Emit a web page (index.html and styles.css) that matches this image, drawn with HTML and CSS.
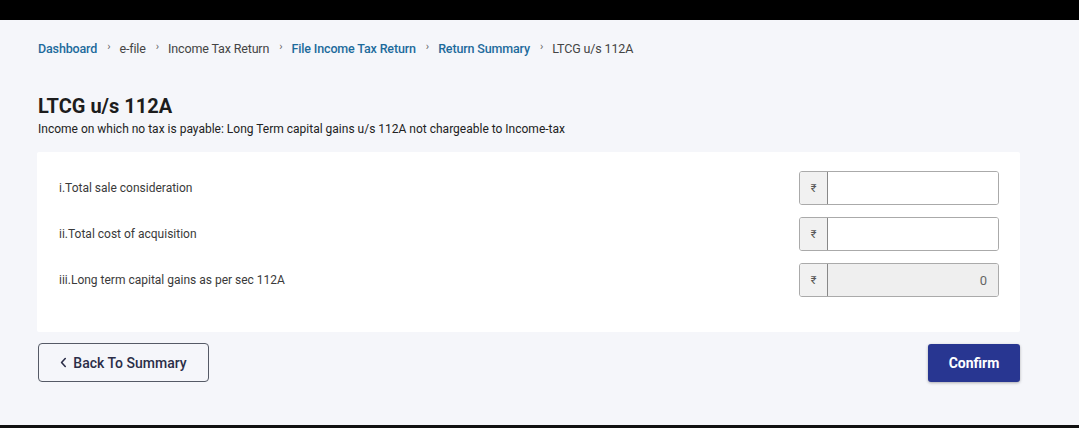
FILE: index.html
```html
<!DOCTYPE html>
<html lang="en">
<head>
<meta charset="utf-8">
<title>LTCG u/s 112A</title>
<link rel="stylesheet" href="styles.css">
</head>
<body>
<div class="topbar"></div>
<main class="page">
  <nav class="crumbs">
    <a class="crumb link">Dashboard</a><span class="sep">›</span>
    <span class="crumb">e-file</span><span class="sep">›</span>
    <span class="crumb">Income Tax Return</span><span class="sep">›</span>
    <a class="crumb link">File Income Tax Return</a><span class="sep">›</span>
    <a class="crumb link">Return Summary</a><span class="sep">›</span>
    <span class="crumb">LTCG u/s 112A</span>
  </nav>
  <h1 class="title">LTCG u/s 112A</h1>
  <p class="subtitle">Income on which no tax is payable: Long Term capital gains u/s 112A not chargeable to Income-tax</p>
  <section class="card">
    <div class="row">
      <label class="label">i.Total sale consideration</label>
      <div class="field"><span class="prefix">₹</span><span class="input"></span></div>
    </div>
    <div class="row">
      <label class="label">ii.Total cost of acquisition</label>
      <div class="field"><span class="prefix">₹</span><span class="input"></span></div>
    </div>
    <div class="row">
      <label class="label">iii.Long term capital gains as per sec 112A</label>
      <div class="field disabled"><span class="prefix">₹</span><span class="input">0</span></div>
    </div>
  </section>
  <div class="actions">
    <button class="btn back"><svg class="chev" viewBox="0 0 8 12" width="7" height="11"><path d="M6 1.5 L1.8 6 L6 10.5" fill="none" stroke="currentColor" stroke-width="1.8" stroke-linecap="round" stroke-linejoin="round"/></svg>Back To Summary</button>
    <button class="btn confirm">Confirm</button>
  </div>
</main>
<div class="bottombar"></div>
</body>
</html>
```

FILE: styles.css
```css
* { box-sizing: border-box; }
html, body { margin: 0; padding: 0; }
body {
  width: 1079px;
  height: 428px;
  overflow: hidden;
  background: #f5f6fa;
  font-family: Roboto, "Noto Sans", Arial, sans-serif;
  color: #222;
  display: flex;
  flex-direction: column;
}
.topbar { height: 20px; background: #000; flex: none; }
.bottombar { height: 3px; background: #111; flex: none; margin-top: auto; }
.page {
  padding: 0 59px 0 37px;
  flex: 1;
}
.crumbs {
  display: flex;
  align-items: center;
  font-size: 12.5px;
  height: 18px;
  margin-top: 19px;
  padding-left: 1px;
}
.crumb { color: #444; letter-spacing: -0.15px; }
.crumb.link { color: #1d6b9c; font-weight: 500; }
.sep {
  color: #666;
  font-size: 11px;
  margin: -4px 9px 0 10px;
}
.title {
  font-size: 20px;
  font-weight: 700;
  margin: 37px 0 0 1px;
  line-height: 24px;
  color: #1d1d1d;
}
.subtitle {
  font-size: 12px;
  margin: 4px 0 0 1px;
  line-height: 14px;
  color: #222;
}
.card {
  background: #fff;
  margin-top: 16px;
  padding: 19px 21px 35px 22px;
  display: flex;
  flex-direction: column;
  gap: 12px;
  border-radius: 2px;
}
.row {
  display: flex;
  align-items: center;
  justify-content: space-between;
  height: 34px;
}
.label { font-size: 12px; color: #3a3a3a; }
.field {
  width: 200px;
  height: 34px;
  border: 1px solid #aaa;
  border-radius: 3px;
  display: flex;
  overflow: hidden;
}
.prefix {
  width: 28px;
  background: #f1f1f1;
  border-right: 1px solid #888;
  display: flex;
  align-items: center;
  justify-content: center;
  font-size: 11px;
  color: #555;
}
.input {
  flex: 1;
  background: #fff;
  display: flex;
  align-items: center;
  justify-content: flex-end;
  padding-right: 11px;
  font-size: 13px;
  color: #666;
}
.field.disabled .input { background: #efefef; }
.actions {
  display: flex;
  justify-content: space-between;
  align-items: center;
  margin-top: 11px;
  padding-left: 1px;
}
.btn {
  font-family: Roboto, "Noto Sans", Arial, sans-serif;
  font-size: 14px;
  font-weight: 500;
  border-radius: 4px;
  height: 39px;
  cursor: pointer;
}
.back {
  width: 171px;
  background: #f5f6fa;
  border: 1px solid #555a66;
  color: #2b2e48;
  display: flex;
  align-items: center;
  justify-content: center;
  gap: 6px;
}
.chev { display: block; }
.confirm {
  width: 92px;
  height: 38px;
  background: #283691;
  color: #fff;
  border: none;
  font-weight: 700;
  border-radius: 3px;
  box-shadow: 0 1px 3px rgba(0,0,0,0.3);
}
```
